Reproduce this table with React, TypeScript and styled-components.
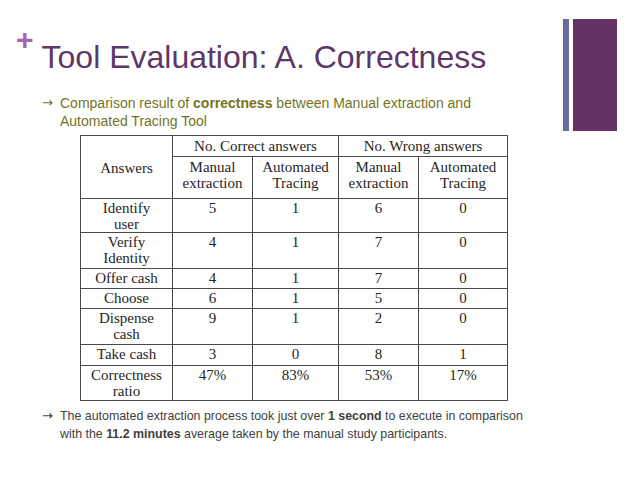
import React from "react";
import styled, { createGlobalStyle } from "styled-components";

const Global = createGlobalStyle`
  html, body { margin: 0; padding: 0; background: #ffffff; }
  #root { width: 638px; height: 479px; }
`;

const Slide = styled.div`
  width: 638px;
  height: 479px;
  display: flex;
  background: #ffffff;
  overflow: hidden;
`;

const Main = styled.div`
  flex: 1;
  display: flex;
  flex-direction: column;
  min-width: 0;
`;

const Deco = styled.div`
  display: flex;
  gap: 4px;
  padding: 19px 21px 0 0;
  align-items: flex-start;
`;

const Bar = styled.div<{ $w: number; $c: string }>`
  width: ${(p) => p.$w}px;
  height: 112px;
  background: ${(p) => p.$c};
`;

const TitleRow = styled.div`
  display: flex;
  align-items: flex-start;
`;

const Plus = styled.span`
  font-family: "Liberation Sans", Arial, sans-serif;
  font-weight: 700;
  font-size: 30px;
  line-height: 30px;
  color: #a463b4;
  margin: 25px 0 0 16px;
`;

const Title = styled.h1`
  margin: 39px 0 0 8px;
  font-family: "Liberation Sans", Arial, sans-serif;
  font-weight: 400;
  font-size: 32px;
  line-height: 36px;
  color: #5d3768;
  white-space: nowrap;
`;

const Bullet = styled.div<{ $color: string; $top: number; $size: number }>`
  display: flex;
  margin: ${(p) => p.$top}px 0 0 42px;
  font-family: "Liberation Sans", Arial, sans-serif;
  font-size: ${(p) => p.$size}px;
  line-height: 18px;
  color: ${(p) => p.$color};
  b { font-weight: 700; }
`;

const Arrow = styled.span`
  flex: 0 0 18px;
  font-family: "DejaVu Sans", sans-serif;
  font-size: 13px;
`;

const BulletText = styled.div<{ $w: number }>`
  width: ${(p) => p.$w}px;
`;

const Table = styled.table`
  margin: 5px 0 0 80px;
  border-collapse: collapse;
  table-layout: fixed;
  width: 427px;
  font-family: "Liberation Serif", "Times New Roman", serif;
  font-size: 15px;
  line-height: 16px;
  color: #262626;
  td, th {
    border: 1px solid #4a4a4a;
    padding: 0 2px;
    text-align: center;
    vertical-align: top;
    font-weight: 400;
  }
`;

const HeadCell = styled.th<{ $mid?: boolean; $pt?: number }>`
  vertical-align: ${(p) => (p.$mid ? "middle" : "top")} !important;
  padding-top: ${(p) => p.$pt ?? 2}px !important;
`;

const Row = styled.tr<{ $h: number }>`
  height: ${(p) => p.$h}px;
`;

const Cell = styled.td`
  padding-top: 1px !important;
`;

const rows: { label: React.ReactNode; vals: string[]; h: number }[] = [
  { label: <>Identify<br />user</>, vals: ["5", "1", "6", "0"], h: 34 },
  { label: <>Verify<br />Identity</>, vals: ["4", "1", "7", "0"], h: 36 },
  { label: "Offer cash", vals: ["4", "1", "7", "0"], h: 20 },
  { label: "Choose", vals: ["6", "1", "5", "0"], h: 20 },
  { label: <>Dispense<br />cash</>, vals: ["9", "1", "2", "0"], h: 36 },
  { label: "Take cash", vals: ["3", "0", "8", "1"], h: 21 },
  { label: <>Correctness<br />ratio</>, vals: ["47%", "83%", "53%", "17%"], h: 35 },
];

export default function App() {
  return (
    <>
      <Global />
      <Slide>
        <Main>
          <TitleRow>
            <Plus>+</Plus>
            <Title>Tool Evaluation: A. Correctness</Title>
          </TitleRow>
          <Bullet $color="#74741e" $top={19} $size={14}>
            <Arrow>→</Arrow>
            <BulletText $w={430}>
              Comparison result of <b>correctness</b> between Manual extraction and Automated Tracing Tool
            </BulletText>
          </Bullet>
          <Table>
            <colgroup>
              <col style={{ width: 92 }} />
              <col style={{ width: 80 }} />
              <col style={{ width: 86 }} />
              <col style={{ width: 80 }} />
              <col style={{ width: 89 }} />
            </colgroup>
            <thead>
              <Row $h={21}>
                <HeadCell rowSpan={2} $mid>Answers</HeadCell>
                <HeadCell colSpan={2} $pt={2}>No. Correct answers</HeadCell>
                <HeadCell colSpan={2} $pt={2}>No. Wrong answers</HeadCell>
              </Row>
              <Row $h={42}>
                <HeadCell>Manual<br />extraction</HeadCell>
                <HeadCell>Automated<br />Tracing</HeadCell>
                <HeadCell>Manual<br />extraction</HeadCell>
                <HeadCell>Automated<br />Tracing</HeadCell>
              </Row>
            </thead>
            <tbody>
              {rows.map((r, i) => (
                <Row key={i} $h={r.h}>
                  <Cell>{r.label}</Cell>
                  {r.vals.map((v, j) => (
                    <Cell key={j}>{v}</Cell>
                  ))}
                </Row>
              ))}
            </tbody>
          </Table>
          <Bullet $color="#404040" $top={6} $size={12.4}>
            <Arrow>→</Arrow>
            <BulletText $w={475}>
              The automated extraction process took just over <b>1 second</b> to execute in comparison with the{" "}
              <b>11.2 minutes</b> average taken by the manual study participants.
            </BulletText>
          </Bullet>
        </Main>
        <Deco>
          <Bar $w={6} $c="#6b6b9f" />
          <Bar $w={44} $c="#663264" />
        </Deco>
      </Slide>
    </>
  );
}
